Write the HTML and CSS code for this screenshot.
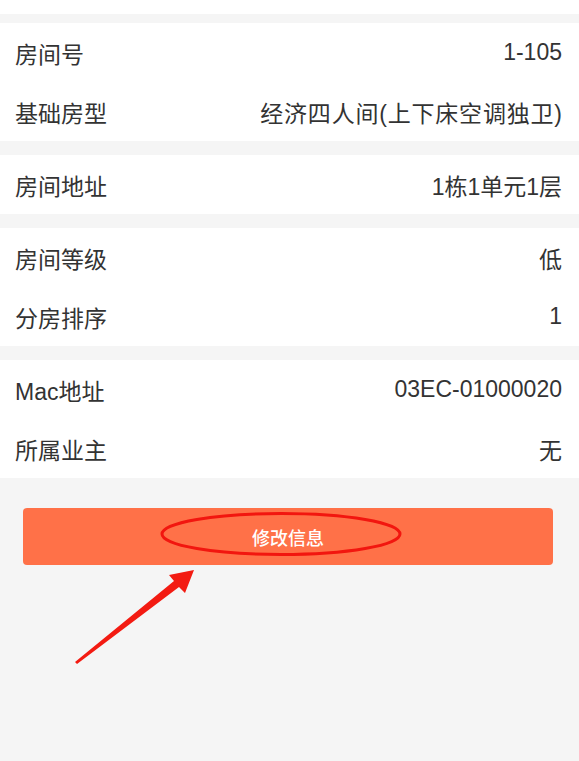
FILE: index.html
```html
<!DOCTYPE html>
<html lang="zh-CN">
<head>
<meta charset="utf-8">
<title>房间信息</title>
<link rel="stylesheet" href="styles.css">
</head>
<body>
<div class="page">
  <div class="top"></div>
  <section class="group first">
    <div class="row"><span class="label">房间号</span><span class="value">1-105</span></div>
    <div class="row"><span class="label">基础房型</span><span class="value wide">经济四人间(上下床空调独卫)</span></div>
  </section>
  <section class="group">
    <div class="row"><span class="label">房间地址</span><span class="value">1栋1单元1层</span></div>
  </section>
  <section class="group">
    <div class="row"><span class="label">房间等级</span><span class="value">低</span></div>
    <div class="row"><span class="label">分房排序</span><span class="value">1</span></div>
  </section>
  <section class="group">
    <div class="row"><span class="label">Mac地址</span><span class="value">03EC-01000020</span></div>
    <div class="row"><span class="label">所属业主</span><span class="value">无</span></div>
  </section>
  <div class="actions">
    <button class="btn" type="button">修改信息</button>
  </div>
  <svg class="annot" width="579" height="761" viewBox="0 0 579 761" xmlns="http://www.w3.org/2000/svg">
    <ellipse cx="281" cy="534" rx="119" ry="20.5" fill="none" stroke="#f2160f" stroke-width="3"/>
    <polygon points="75,662 174,581 169,575 194,570 185,593 179,587 77,664" fill="#f31b12"/>
  </svg>
</div>
</body>
</html>
```
FILE: styles.css
```css
html, body {
  margin: 0;
  padding: 0;
  background: #f5f5f5;
}
.page {
  position: relative;
  width: 579px;
  min-height: 761px;
  background: #f5f5f5;
  font-family: "Liberation Sans", "Noto Sans CJK SC", sans-serif;
  color: #333;
}
.top {
  height: 14px;
  background: #fff;
}
.group {
  background: #fff;
  margin-top: 14px;
}
.group.first {
  margin-top: 9px;
}
.row {
  height: 59px;
  display: flex;
  align-items: center;
  justify-content: space-between;
  padding: 0 17px 0 15px;
  font-size: 23px;
}
.value.wide {
  letter-spacing: 0.8px;
  margin-right: -0.8px;
}
.actions {
  padding: 30px 26px 0 23px;
}
.btn {
  display: flex;
  align-items: center;
  justify-content: center;
  width: 100%;
  height: 57px;
  border: 0;
  border-radius: 4px;
  background: #ff7148;
  color: #fff;
  font-family: "Noto Sans CJK SC", sans-serif;
  font-size: 18px;
  font-weight: 500;
  padding: 0;
}
.annot {
  position: absolute;
  left: 0;
  top: 0;
  pointer-events: none;
}
```
